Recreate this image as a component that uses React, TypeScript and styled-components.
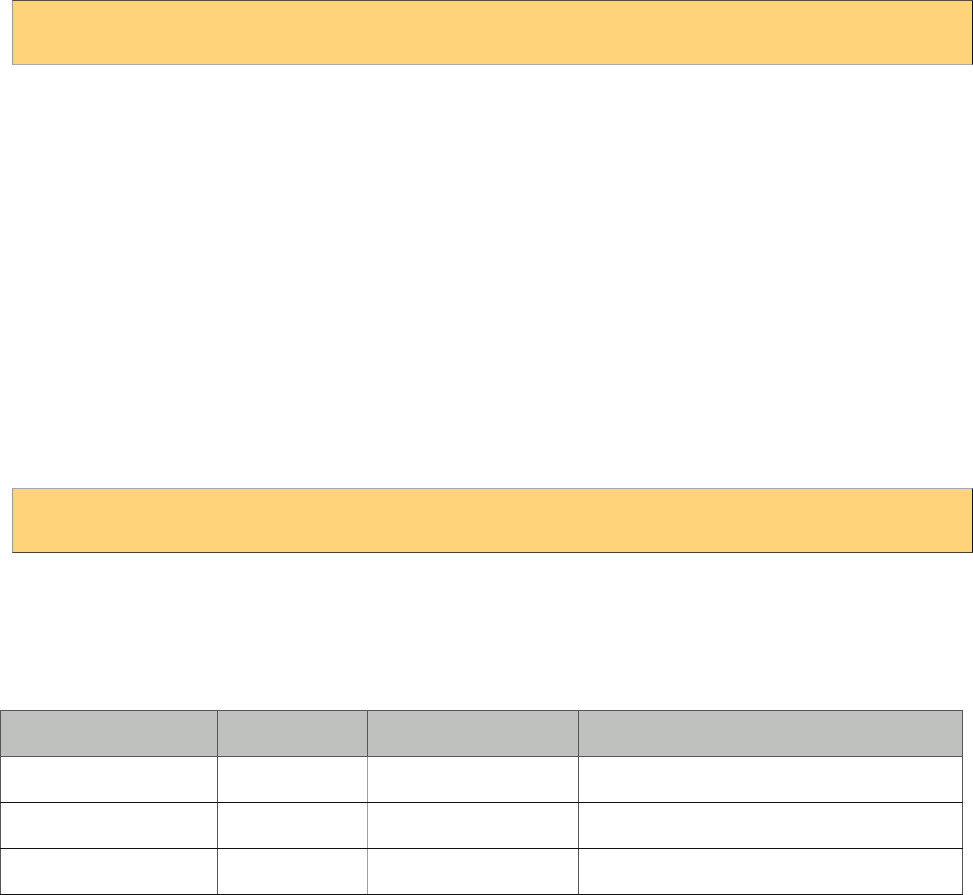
import styled, { createGlobalStyle } from 'styled-components';

const GlobalStyle = createGlobalStyle`
body {
	margin: 0;
	background: #fff;
	font-family: "Liberation Sans", Arial, sans-serif;
}
`;

const columns = [217, 150, 211, 384];
const rows = [0, 1, 2];

export default function App() {
	return (
		<Page>
			<GlobalStyle />
			<Banner $top />
			<Spacer $height={423} />
			<Banner />
			<Spacer $height={157} />
			<Grid>
				<colgroup>
					{columns.map((w, i) => (
						<col key={i} style={{ width: w }} />
					))}
				</colgroup>
				<thead>
					<tr>
						{columns.map((_, i) => (
							<HeadCell key={i} />
						))}
					</tr>
				</thead>
				<tbody>
					{rows.map((r) => (
						<tr key={r}>
							{columns.map((_, i) => (
								<Cell key={i} $lightLeft={i === 2} $lightRight={i === 1} />
							))}
						</tr>
					))}
				</tbody>
			</Grid>
		</Page>
	);
}

const Page = styled.div`
display: flex;
flex-direction: column;
width: 973px;
`;

const Spacer = styled.div<{ $height: number }>`
height: ${(p) => p.$height}px;
`;

const Banner = styled.div<{ $top?: boolean }>`
margin-left: 12px;
width: 959px;
height: 63px;
background-color: #fed37a;
border-left: 1px solid #a09a90;
border-right: 1px solid #111;
border-top: 1px solid ${(p) => (p.$top ? '#5b4c33' : '#a8a8a8')};
border-bottom: 1px solid ${(p) => (p.$top ? '#a8a8a8' : '#4a3f2c')};
`;

const Grid = styled.table`
border-collapse: collapse;
table-layout: fixed;
width: 962px;
margin: 0;
`;

const HeadCell = styled.th`
height: 45px;
padding: 0;
background-color: #bfc1bf;
border: 1px solid #555;
`;

const Cell = styled.td<{ $lightLeft?: boolean; $lightRight?: boolean }>`
height: 45px;
padding: 0;
background: #fff;
border-top: 1px solid #111;
border-bottom: 1px solid #111;
border-left: 1px solid ${(p) => (p.$lightLeft ? '#a0a0a0' : '#555')};
border-right: 1px solid ${(p) => (p.$lightRight ? '#a0a0a0' : '#555')};
`;
